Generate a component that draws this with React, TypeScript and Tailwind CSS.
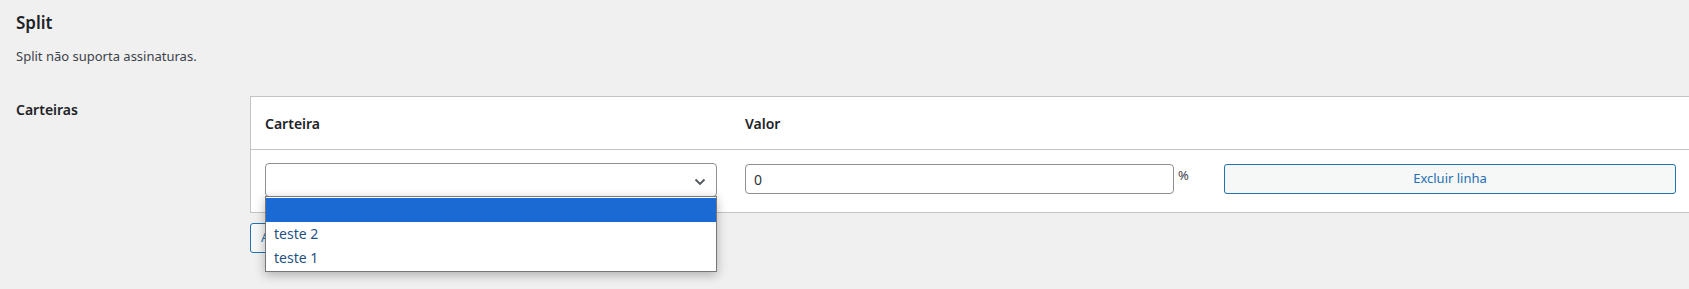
import { useState } from 'react'

const opcoes = ['', 'teste 2', 'teste 1']

export default function App() {
  const [valor, setValor] = useState('0')

  return (
    <div className="h-[289px] w-full overflow-hidden bg-[#f0f0f1] font-['Noto_Sans',sans-serif] text-[#1d2327]">
      <div className="pl-4 pt-[12px]">
        <h2 className="text-[17px] leading-[22px] font-semibold">Split</h2>
        <p className="mt-[13px] text-[13px] leading-[19px] text-[#3c434a]">Split não suporta assinaturas.</p>

        <div className="mt-[30px] flex">
          <div className="w-[234px] shrink-0 pt-[4px] text-[14px] leading-[20px] font-semibold">Carteiras</div>

          <div className="shrink-0">
            <div className="w-[1440px] border border-[#c3c4c7] bg-white">
              {/* cabeçalho */}
              <div className="flex h-[53px] items-center border-b border-[#c3c4c7] text-[14px] font-semibold">
                <div className="w-[479px] pl-[14px]">Carteira</div>
                <div className="w-[479px] pl-[15px]">Valor</div>
                <div className="flex-1" />
              </div>

              {/* linha */}
              <div className="flex h-[62px] items-start pt-[13px]">
                <div className="relative w-[479px] pl-[14px]">
                  <div className="flex h-[34px] w-[452px] items-center justify-end rounded-[4px] border border-[#8c8f94] bg-white pr-[10px]">
                    <svg width="12" height="8" viewBox="0 0 12 8" className="mt-[3px]">
                      <path d="M1.5 1.5 L6 6 L10.5 1.5" fill="none" stroke="#50575e" strokeWidth="1.8" />
                    </svg>
                  </div>
                  <ul className="absolute top-[33px] left-[14px] z-10 w-[452px] border border-[#767676] bg-white py-[1px] text-[14px] text-[#1f5283] shadow-[0_3px_10px_rgba(0,0,0,0.28)]">
                    {opcoes.map((o, i) => (
                      <li
                        key={i}
                        className={i === 0 ? 'h-[24px] bg-[#1b69d3] pl-[8px] leading-[24px]' : 'h-[24px] pl-[8px] leading-[24px]'}
                      >
                        {o}
                      </li>
                    ))}
                  </ul>
                </div>

                <div className="flex w-[479px] items-start pl-[15px] pt-[1px]">
                  <input
                    className="h-[30px] w-[429px] rounded-[4px] border border-[#8c8f94] bg-white px-[8px] text-[14px] text-[#2c3338] outline-none"
                    value={valor}
                    onChange={(e) => setValor(e.target.value)}
                  />
                  <span className="ml-[4px] pt-[2px] text-[13px] text-[#3c434a]">%</span>
                </div>

                <div className="flex-1 pl-[15px] pt-[1px]">
                  <button className="h-[30px] w-[452px] rounded-[3px] border border-[#2271b1] bg-[#f6f7f7] text-[13px] text-[#2271b1]">
                    Excluir linha
                  </button>
                </div>
              </div>
            </div>

            <button className="mt-[10px] h-[30px] rounded-[3px] border border-[#2271b1] bg-[#f6f7f7] px-[10px] text-[13px] text-[#2271b1]">
              Adicionar linha
            </button>
          </div>
        </div>
      </div>
    </div>
  )
}
